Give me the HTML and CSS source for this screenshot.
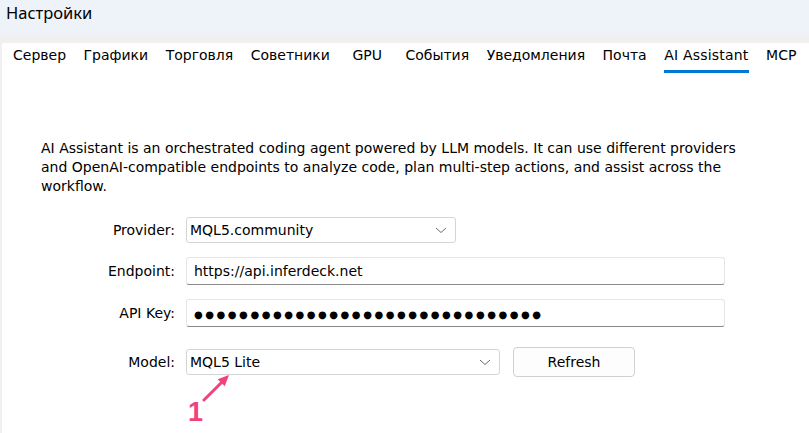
FILE: index.html
```html
<!DOCTYPE html>
<html lang="ru">
<head>
    <meta charset="UTF-8">
    <meta name="viewport" content="width=device-width, initial-scale=1.0">
    <title>Настройки</title>
    <link rel="stylesheet" href="styles.css">
</head>
<body>
    <div class="titlebar">Настройки</div>
    <div class="panel">
        <div class="tabs">
            <div class="tab">Сервер</div>
            <div class="tab">Графики</div>
            <div class="tab">Торговля</div>
            <div class="tab">Советники</div>
            <div class="tab tab-wide">GPU</div>
            <div class="tab">События</div>
            <div class="tab">Уведомления</div>
            <div class="tab">Почта</div>
            <div class="tab active">AI Assistant</div>
            <div class="tab">MCP</div>
        </div>

        <div class="content">
            <p class="intro">AI Assistant is an orchestrated coding agent powered by LLM models. It can use different providers and OpenAI-compatible endpoints to analyze code, plan multi-step actions, and assist across the workflow.</p>

            <div class="form">
                <label class="label">Provider:</label>
                <div class="field">
                    <div class="select provider">
                        <span>MQL5.community</span>
                        <svg class="chevron" width="12" height="7" viewBox="0 0 12 7"><path d="M1 1 L6 5.5 L11 1" fill="none" stroke="#6b6b6b" stroke-width="1"/></svg>
                    </div>
                </div>

                <label class="label">Endpoint:</label>
                <div class="field">
                    <div class="input">https://api.inferdeck.net</div>
                </div>

                <label class="label">API Key:</label>
                <div class="field">
                    <div class="input"><span class="dots">●●●●●●●●●●●●●●●●●●●●●●●●●●●●●●●</span></div>
                </div>

                <label class="label model-label">Model:</label>
                <div class="field model-row">
                    <div class="select model">
                        <span>MQL5 Lite</span>
                        <svg class="chevron" width="12" height="7" viewBox="0 0 12 7"><path d="M1 1 L6 5.5 L11 1" fill="none" stroke="#6b6b6b" stroke-width="1"/></svg>
                    </div>
                    <button class="button">Refresh</button>
                </div>
            </div>
        </div>

        <!-- pointer to the model box -->
        <div class="callout">
            <svg width="40" height="40" viewBox="0 0 40 40">
                <line x1="2" y1="28" x2="20" y2="10" stroke="#f2417c" stroke-width="3" stroke-linecap="round"/>
                <polygon points="27,3 22.7,14.3 15.7,7.3" fill="#f2417c"/>
            </svg>
            <span class="callout-num">1</span>
        </div>
    </div>
</body>
</html>
```

FILE: styles.css
```css
body {
    margin: 0;
    padding: 0;
    background-color: #f0f0f0;
    font-family: "DejaVu Sans", Tahoma, sans-serif;
    color: #000;
    height: 433px;
    overflow: hidden;
}

.titlebar {
    height: 33px;
    background-color: #eef2f9;
    font-family: "Noto Sans", "Open Sans", sans-serif;
    font-size: 16.5px;
    line-height: 25px;
    padding-left: 6px;
}

.panel {
    position: relative;
    margin-top: 10px;
    margin-left: 2px;
    background-color: #fff;
    height: 390px;
}

.tabs {
    display: flex;
    gap: 17.5px;
    padding-left: 11px;
    height: 30px;
}

.tab {
    font-size: 14px;
    line-height: 17px;
    padding-top: 4px;
    box-sizing: border-box;
    height: 30px;
    white-space: nowrap;
}

.tab-wide {
    padding-left: 5px;
    padding-right: 6px;
}

.tab.active {
    border-bottom: 3px solid #0078d4;
    letter-spacing: 0.2px;
}

.content {
    padding-left: 39px;
}

.intro {
    margin: 66px 0 0;
    width: 720px;
    font-size: 14px;
    line-height: 19px;
}

.form {
    display: grid;
    grid-template-columns: 134px 1fr;
    column-gap: 11px;
    row-gap: 14px;
    margin-top: 21px;
    align-items: center;
}

.label {
    text-align: right;
    font-size: 14px;
}

.model-label {
    margin-top: 6px;
}

.field {
    display: flex;
    align-items: center;
}

.select {
    display: flex;
    align-items: center;
    justify-content: space-between;
    box-sizing: border-box;
    height: 26px;
    border: 1px solid #d5d5d5;
    border-radius: 3px;
    padding: 0 8px 0 3px;
    font-size: 14px;
    background-color: #fff;
}

.provider {
    width: 270px;
}

.model {
    width: 314px;
}

.chevron {
    display: block;
}

.input {
    box-sizing: border-box;
    width: 539px;
    height: 28px;
    border: 1px solid #e6e6e6;
    border-bottom: 1px solid #8a8a8a;
    border-radius: 3px;
    padding: 0 7px;
    font-size: 14px;
    line-height: 26px;
}

.dots {
    font-size: 10px;
    letter-spacing: 2.55px;
}

.model-row {
    gap: 13px;
    margin-top: 6px;
}

.button {
    width: 122px;
    height: 30px;
    border: 1px solid #d0d0d0;
    border-radius: 4px;
    background-color: #fdfdfd;
    font-family: "DejaVu Sans", Tahoma, sans-serif;
    font-size: 14px;
    color: #000;
}

.callout {
    position: absolute;
    left: 186px;
    top: 329px;
}

.callout svg {
    position: absolute;
    left: 14px;
    top: 0;
}

.callout-num {
    position: absolute;
    left: 0;
    top: 26px;
    font-family: "Liberation Sans", sans-serif;
    font-weight: bold;
    font-size: 27px;
    line-height: 28px;
    color: #f2417c;
}
```
